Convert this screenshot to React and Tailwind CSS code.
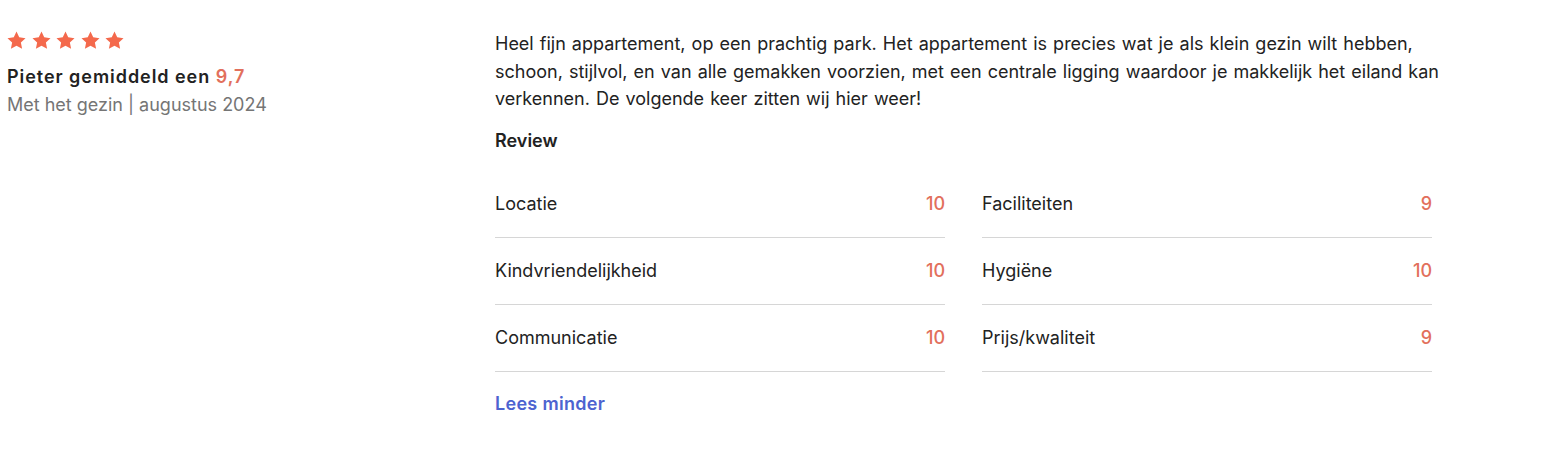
const stars = [0, 1, 2, 3, 4];

const scores = [
  { label: 'Locatie', value: '10' },
  { label: 'Faciliteiten', value: '9' },
  { label: 'Kindvriendelijkheid', value: '10' },
  { label: 'Hygiëne', value: '10' },
  { label: 'Communicatie', value: '10' },
  { label: 'Prijs/kwaliteit', value: '9' },
];

const Star = () => (
  <svg className="w-[21px] h-[21px] text-[#f4694c]" viewBox="0 0 24 24" fill="currentColor">
    <path d="M12 1.8l3.1 6.6 7.2.9-5.3 5 1.4 7.2L12 18l-6.4 3.5 1.4-7.2-5.3-5 7.2-.9z" />
  </svg>
);

const App = () => {
  return (
    <div
      className="min-h-screen bg-white text-[#222222] pl-[7px] pt-[30px]"
      style={{ fontFamily: 'Inter, "Liberation Sans", sans-serif' }}
    >
      <div className="flex items-start">
        {/* Reviewer */}
        <div className="w-[488px] shrink-0">
          <div className="flex gap-[3.5px] -ml-[1px]">
            {stars.map((s) => (
              <Star key={s} />
            ))}
          </div>
          <p className="mt-[12px] text-[18px] leading-[28px] font-semibold tracking-[0.95px]">
            Pieter gemiddeld een <span className="text-[#e2705c]">9,7</span>
          </p>
          <p className="text-[18px] leading-[28px] text-[#757575]">
            Met het gezin | augustus 2024
          </p>
        </div>

        {/* Review body */}
        <div className="w-[937px]">
          <p className="w-[980px] text-[18px] leading-[27.5px] [word-spacing:1px]">
            Heel fijn appartement, op een prachtig park. Het appartement is precies wat je als klein gezin wilt hebben,
            <br />
            schoon, stijlvol, en van alle gemakken voorzien, met een centrale ligging waardoor je makkelijk het eiland kan
            <br />
            verkennen. De volgende keer zitten wij hier weer!
          </p>
          <h3 className="mt-[14px] text-[18px] leading-[28px] font-semibold">Review</h3>

          <div className="mt-[16px] grid grid-cols-2 gap-x-[37px]">
            {scores.map((s) => (
              <div
                key={s.label}
                className="h-[67px] flex items-center justify-between border-b border-[#d6d6d6] text-[18px]"
              >
                <span>{s.label}</span>
                <span className="text-[#e2705c] font-medium">{s.value}</span>
              </div>
            ))}
          </div>

          <button className="mt-[18px] text-[18px] leading-[28px] font-semibold text-[#4d63d0] tracking-[0.3px]">
            Lees minder
          </button>
        </div>
      </div>
    </div>
  );
};

export default App;
